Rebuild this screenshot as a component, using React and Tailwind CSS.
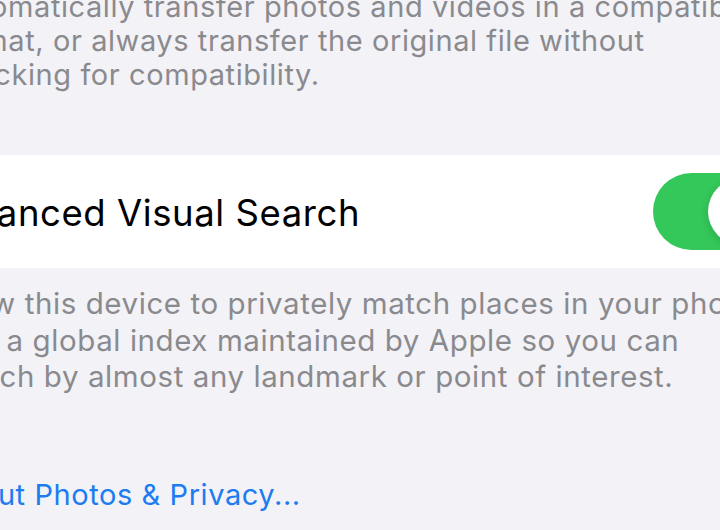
import React from 'react';

const font = { fontFamily: 'Inter, "Noto Sans", sans-serif' };

const App = () => {
  return (
    <div className="w-[720px] h-[530px] overflow-hidden bg-[#f2f2f7] tracking-[0.036em]" style={font}>
      {/* Upper footer text */}
      <div className="-ml-[58px] -mt-[10px] text-[29px] leading-[34px] text-[#8a8a8e] whitespace-nowrap">
        <div>Automatically transfer photos and videos in a compatible</div>
        <div>format, or always transfer the original file without</div>
        <div>checking for compatibility.</div>
      </div>

      {/* Toggle row */}
      <div className="mt-[63px] h-[113px] bg-white flex items-center justify-between">
        <div className="-ml-[70px] mt-[2px] text-[36.5px] leading-[36px] text-black whitespace-nowrap">
          Enhanced Visual Search
        </div>
        <div className="w-[127px] h-[77px] shrink-0 rounded-full bg-[#34c759] -mr-[60px] flex items-center justify-end pr-[5px]">
          <div className="w-[67px] h-[67px] rounded-full bg-white shadow-[0_3px_8px_rgba(0,0,0,0.15)]" />
        </div>
      </div>

      {/* Lower footer text */}
      <div className="-ml-[63px] mt-[17px] text-[29.5px] leading-[36.5px] text-[#8a8a8e] whitespace-nowrap">
        <div>Allow this device to privately match places in your photos</div>
        <div>with a global index maintained by Apple so you can</div>
        <div>search by almost any landmark or point of interest.</div>
      </div>

      {/* Link */}
      <div className="-ml-[59px] mt-[81px] text-[29px] leading-[37px] text-[#1c7cf0] whitespace-nowrap">
        About Photos &amp; Privacy...
      </div>
    </div>
  );
};

export default App;
